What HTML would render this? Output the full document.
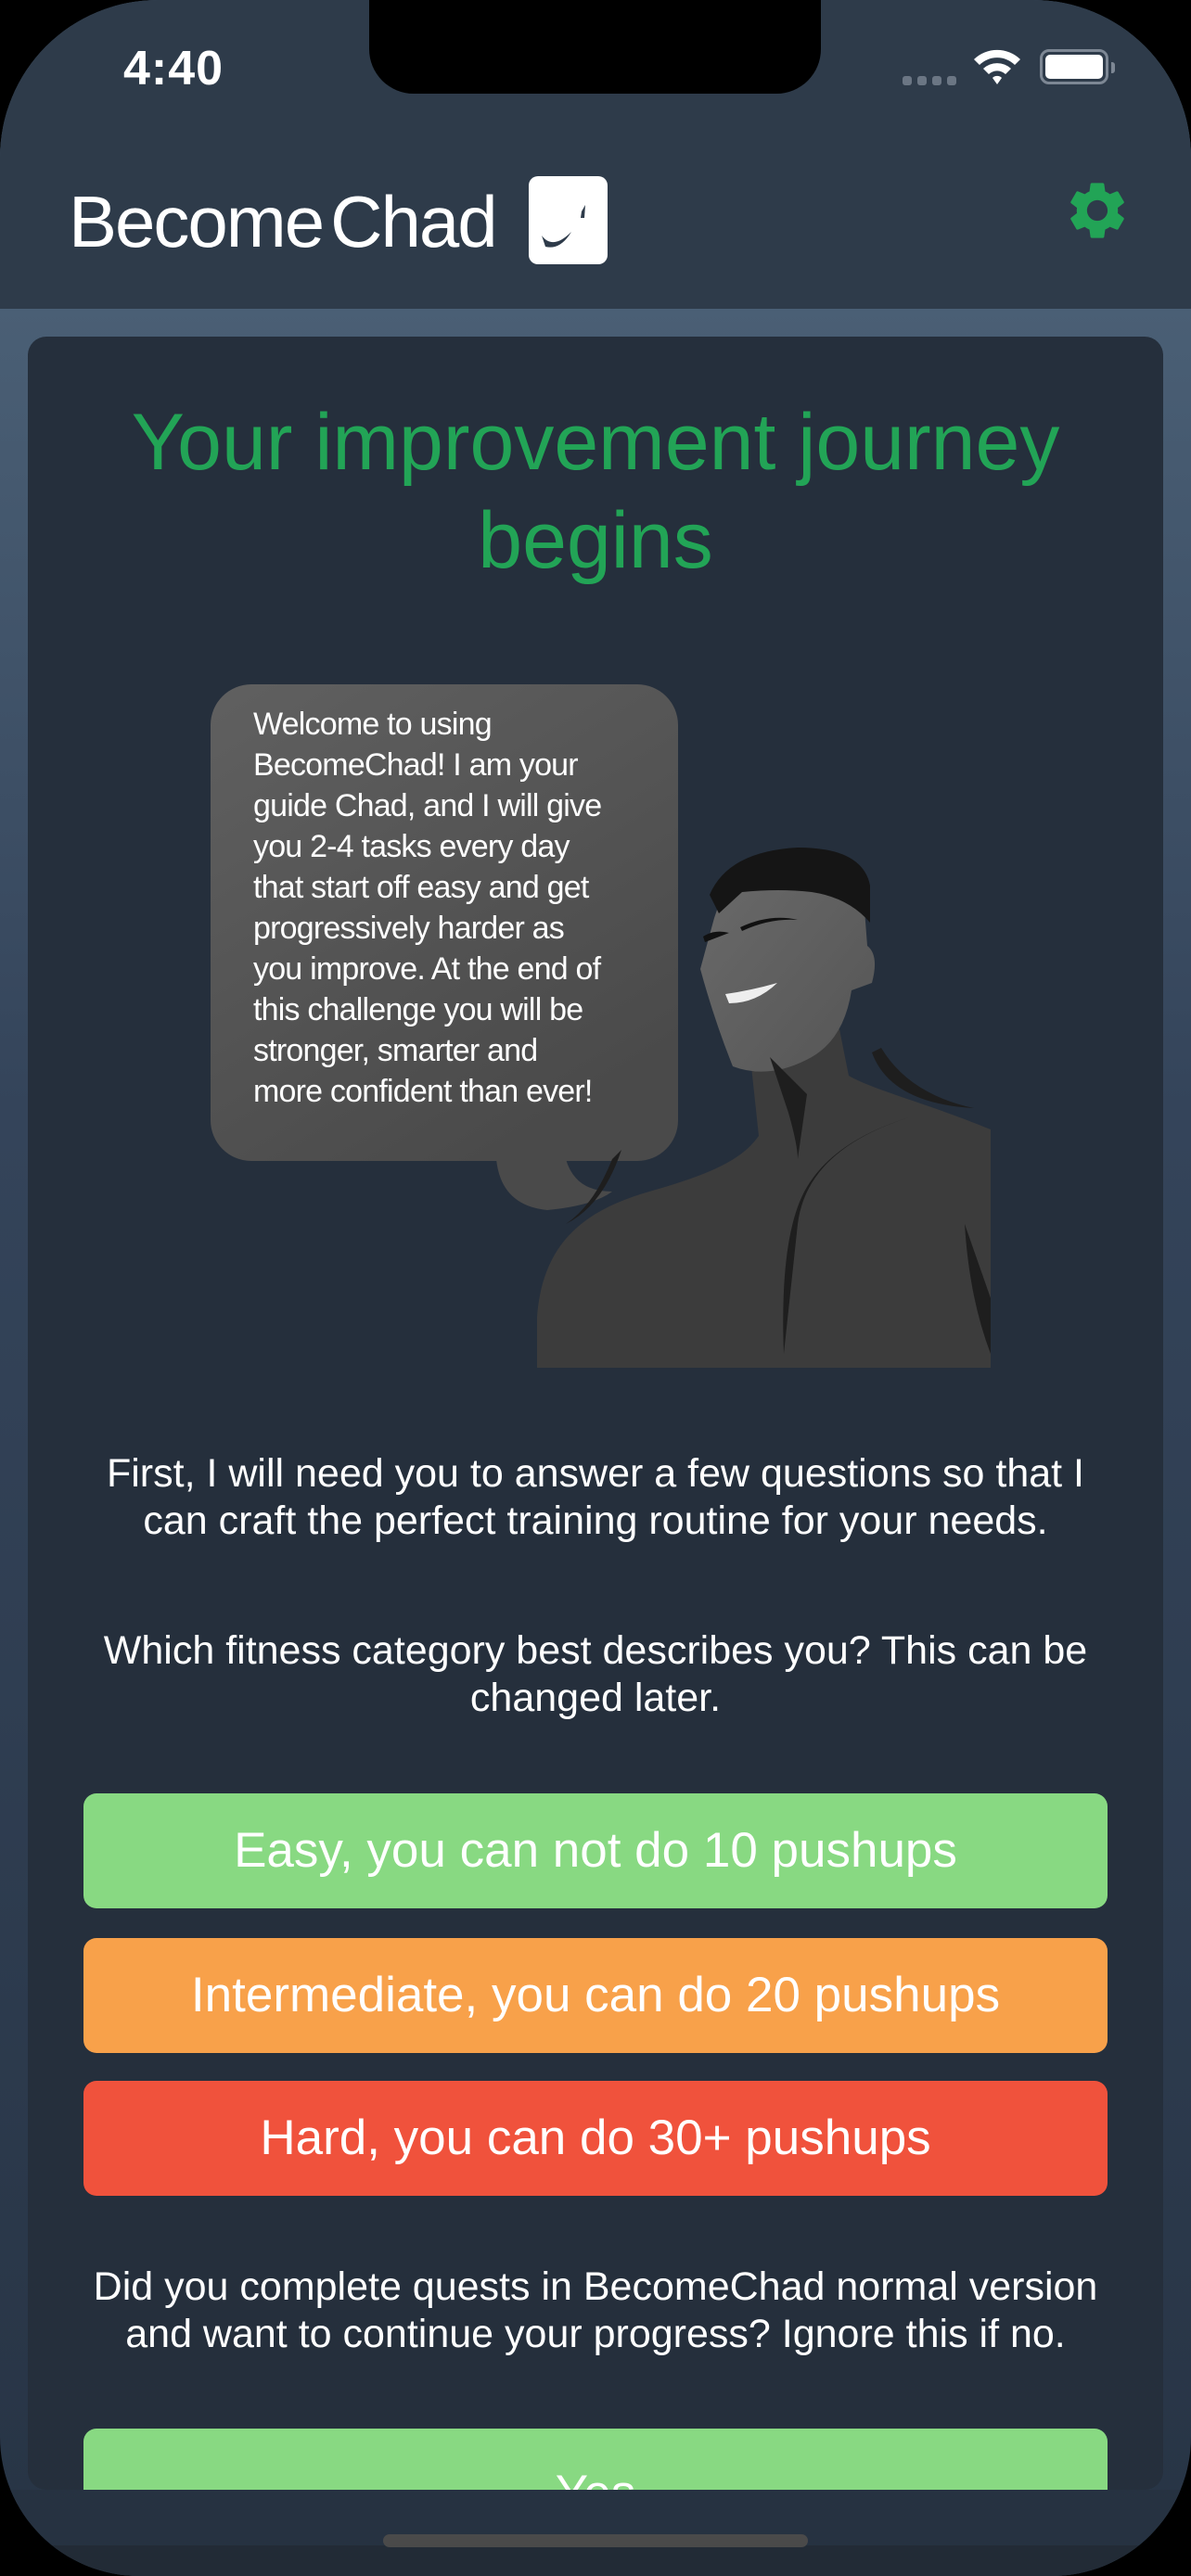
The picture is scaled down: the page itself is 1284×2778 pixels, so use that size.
<!DOCTYPE html>
<html><head><meta charset="utf-8"><style>
*{margin:0;padding:0;box-sizing:border-box}
html,body{width:1284px;height:2778px;background:#000;overflow:hidden}
.screen{position:absolute;left:0;top:0;width:1284px;height:2778px;border-radius:170px 170px 150px 150px;overflow:hidden;background:linear-gradient(#4a5f75 333px,#34445a 1200px,#283546 2700px);font-family:"Liberation Sans",sans-serif}
.header{position:absolute;left:0;top:0;width:1284px;height:333px;background:#2e3b4a}
.notch{position:absolute;left:398px;top:0;width:487px;height:101px;background:#000;border-radius:0 0 48px 48px}
.time{position:absolute;left:133px;top:44px;font-size:52px;font-weight:bold;color:#fff;letter-spacing:1px}
.card{position:absolute;left:30px;top:363px;width:1224px;height:2322px;background:#252f3c;border-radius:20px}
.t{position:absolute;left:0;width:1284px;text-align:center;color:#fff}
.btn{position:absolute;left:90px;width:1104px;height:124px;border-radius:14px;color:#fff;font-size:53px;text-align:center;line-height:124px}
.bottom{position:absolute;left:0;top:2685px;width:1284px;height:93px;background:#263241}
</style></head><body>
<div class="screen">
<div class="header"></div>
<div class="notch"></div>
<div class="time">4:40</div>
<div style="position:absolute;left:973px;top:82px;">
 <span style="position:absolute;left:0;width:10px;height:10px;border-radius:3px;background:#6b7684"></span>
 <span style="position:absolute;left:16px;width:10px;height:10px;border-radius:3px;background:#6b7684"></span>
 <span style="position:absolute;left:32px;width:10px;height:10px;border-radius:3px;background:#6b7684"></span>
 <span style="position:absolute;left:48px;width:10px;height:10px;border-radius:3px;background:#6b7684"></span>
</div>
<svg style="position:absolute;left:1048px;top:52px" width="54" height="42" viewBox="0 0 54 42"><path d="M2 12 A36 36 0 0 1 52 12 L46 18 A27 27 0 0 0 8 18Z M12 22 A22 22 0 0 1 42 22 L36 28 A13 13 0 0 0 18 28Z M22 32 A7 7 0 0 1 32 32 L27 39Z" fill="#fff"/></svg>
<div style="position:absolute;left:1121px;top:53px;width:74px;height:38px;border:3px solid #7d8794;border-radius:10px"><div style="position:absolute;left:3px;top:3px;right:3px;bottom:3px;background:#fff;border-radius:5px"></div></div>
<div style="position:absolute;left:1198px;top:67px;width:4px;height:12px;background:#7d8794;border-radius:0 3px 3px 0"></div>
<div style="position:absolute;left:74px;top:194px;font-size:78px;color:#fff;letter-spacing:-2px">Become<span style="margin-left:8px">Chad</span></div>
<div style="position:absolute;left:570px;top:190px;width:85px;height:95px;background:#fff;border-radius:10px"><svg width="85" height="95"><path d="M14 64 Q26 80 46 60 Q34 80 18 76Z" fill="#2e3b4a"/><path d="M57 38 l4 -7 l-1 14 l-4 0z" fill="#2e3b4a"/></svg></div>
<svg style="position:absolute;left:1146px;top:190px" width="74" height="74" viewBox="0 0 24 24"><path fill="#22a456" d="M19.14 12.94c.04-.3.06-.61.06-.94 0-.32-.02-.64-.07-.94l2.03-1.58a.49.49 0 0 0 .12-.61l-1.92-3.320a.49.49 0 0 0-.59-.22l-2.39.96c-.5-.38-1.03-.7-1.62-.94l-.36-2.54a.48.48 0 0 0-.48-.41h-3.84c-.24 0-.43.17-.47.41l-.36 2.54c-.59.24-1.130.57-1.62.94l-2.39-.96a.48.48 0 0 0-.59.22L2.74 8.87c-.12.21-.08.47.12.61l2.030 1.58c-.05.3-.09.63-.09.94s.02.64.07.94l-2.03 1.58a.49.49 0 0 0-.12.61l1.92 3.32c.12.22.37.29.59.22l2.39-.96c.5.38 1.030.7 1.62.94l.36 2.54c.05.24.24.41.48.41h3.84c.24 0 .44-.17.47-.41l.36-2.54c.59-.24 1.13-.56 1.62-.94l2.39.96c.22.08.47 0 .59-.22l1.92-3.32c.12-.22.07-.47-.12-.61l-2.01-1.58zM12 15.6c-1.98 0-3.6-1.62-3.6-3.6s1.62-3.6 3.6-3.6 3.6 1.62 3.6 3.6-1.62 3.6-3.6 3.6z"/></svg>
<div class="card"></div>
<div class="t" style="top:424px;font-size:86px;line-height:106px;color:#22a456;">Your improvement journey<br>begins</div>
<svg style="position:absolute;left:0;top:700px" width="1284" height="800" viewBox="0 700 1284 800">
<defs><linearGradient id="bg" x1="0" y1="0" x2="0.6" y2="1"><stop offset="0" stop-color="#606060"/><stop offset="1" stop-color="#4a4a4a"/></linearGradient>
<linearGradient id="fg" x1="0" y1="0" x2="1" y2="1"><stop offset="0" stop-color="#6a6a6a"/><stop offset="1" stop-color="#555"/></linearGradient></defs>
<rect x="227" y="738" width="504" height="514" rx="44" fill="url(#bg)"/>
<path d="M535 1250 Q540 1300 590 1305 Q640 1300 660 1285 Q620 1285 610 1250Z" fill="#4a4a4a"/>
<path d="M579 1475 L579 1420 C585 1340 630 1305 700 1285 C770 1265 800 1250 818 1225 L810 1150 L905 1110 L915 1160 C940 1175 1000 1190 1068 1218 L1068 1475Z" fill="#3c3c3c"/>
<path d="M770 990 L782 955 Q810 930 850 928 Q900 925 930 955 L935 1020 Q948 1030 940 1060 L918 1068 Q910 1120 875 1140 Q830 1165 790 1150 Q770 1100 755 1045Z" fill="url(#fg)"/>
<path d="M765 965 Q785 918 860 914 Q930 914 938 955 L938 995 Q915 968 875 962 Q840 958 800 962 L775 985Z" fill="#151515"/>
<path d="M782 1072 Q810 1068 838 1060 Q815 1082 786 1082Z" fill="#eee"/>
<path d="M798 1000 Q830 985 860 992 Q830 990 800 1004Z" fill="#111"/>
<path d="M758 1010 Q770 1002 786 1006 L760 1016Z" fill="#111"/>
<path d="M830 1140 L850 1200 Q860 1235 860 1250 L870 1180Z" fill="#1e1e1e"/>
<path d="M940 1135 Q960 1190 1050 1195 Q980 1180 950 1130Z" fill="#1e1e1e"/>
<path d="M980 1205 Q870 1240 860 1320 L845 1460 Q840 1330 870 1280 Q900 1230 980 1205Z" fill="#1e1e1e"/>
<path d="M660 1250 Q640 1300 610 1320 Q650 1300 670 1240Z" fill="#1e1e1e"/>
<path d="M1040 1320 Q1045 1400 1068 1460 L1068 1400Z" fill="#1e1e1e"/>
<text fill="#fff" font-family="Liberation Sans,sans-serif" font-size="34" letter-spacing="-0.8">
<tspan x="273" y="792">Welcome to using</tspan>
<tspan x="273" y="836">BecomeChad! I am your</tspan>
<tspan x="273" y="880">guide Chad, and I will give</tspan>
<tspan x="273" y="924">you 2-4 tasks every day</tspan>
<tspan x="273" y="968">that start off easy and get</tspan>
<tspan x="273" y="1012">progressively harder as</tspan>
<tspan x="273" y="1056">you improve. At the end of</tspan>
<tspan x="273" y="1100">this challenge you will be</tspan>
<tspan x="273" y="1144">stronger, smarter and</tspan>
<tspan x="273" y="1188">more confident than ever!</tspan>
</text>
</svg>
<div class="t" style="top:1564px;font-size:43px;line-height:51px">First, I will need you to answer a few questions so that I<br>can craft the perfect training routine for your needs.</div>
<div class="t" style="top:1755px;font-size:43px;line-height:51px">Which fitness category best describes you? This can be<br>changed later.</div>
<div class="btn" style="top:1934px;background:#88d982">Easy, you can not do 10 pushups</div>
<div class="btn" style="top:2090px;background:#f8a14a">Intermediate, you can do 20 pushups</div>
<div class="btn" style="top:2244px;background:#f0523c">Hard, you can do 30+ pushups</div>
<div class="t" style="top:2441px;font-size:43px;line-height:51px">Did you complete quests in BecomeChad normal version<br>and want to continue your progress? Ignore this if no.</div>
<div class="btn" style="top:2619px;background:#88d982;line-height:140px">Yes</div>
<div class="bottom"></div>
<div style="position:absolute;left:0;top:2745px;width:1284px;height:33px;background:#222b36"></div>
<div style="position:absolute;left:413px;top:2733px;width:458px;height:14px;border-radius:7px;background:#4a4a4a"></div>
</div>
</body></html>
